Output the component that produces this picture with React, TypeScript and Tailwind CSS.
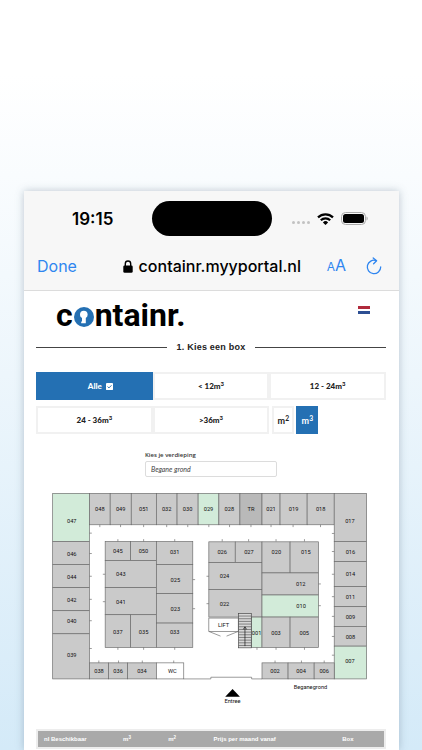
import type { ReactNode } from "react";

type Box = {
  id: string;
  x1: number;
  y1: number;
  x2: number;
  y2: number;
  label?: [number, number];
  fill?: string;
};

const GREY = "#cacaca";
const FREE = "#d2ebd9";

const boxes: Box[] = [
  { id: "047", x1: 2, y1: 1, x2: 112, y2: 145, label: [59, 84], fill: FREE },
  { id: "048", x1: 112, y1: 1, x2: 174, y2: 95 },
  { id: "049", x1: 174, y1: 1, x2: 237, y2: 95 },
  { id: "051", x1: 237, y1: 1, x2: 312, y2: 95 },
  { id: "032", x1: 312, y1: 1, x2: 374, y2: 95 },
  { id: "030", x1: 374, y1: 1, x2: 437, y2: 95 },
  { id: "029", x1: 437, y1: 1, x2: 499, y2: 95, fill: FREE },
  { id: "028", x1: 499, y1: 1, x2: 562, y2: 95 },
  { id: "TR", x1: 562, y1: 1, x2: 628, y2: 95, fill: "#b9b9b9" },
  { id: "021", x1: 628, y1: 1, x2: 682, y2: 95 },
  { id: "019", x1: 682, y1: 1, x2: 763, y2: 95 },
  { id: "018", x1: 763, y1: 1, x2: 844, y2: 95 },
  { id: "017", x1: 844, y1: 1, x2: 941, y2: 145, label: [891, 84] },
  { id: "046", x1: 2, y1: 145, x2: 112, y2: 214, label: [59, 180] },
  { id: "044", x1: 2, y1: 214, x2: 112, y2: 283, label: [59, 249] },
  { id: "042", x1: 2, y1: 283, x2: 112, y2: 352, label: [59, 318] },
  { id: "040", x1: 2, y1: 352, x2: 112, y2: 421, label: [59, 382] },
  { id: "039", x1: 2, y1: 421, x2: 112, y2: 556, label: [59, 483] },
  { id: "016", x1: 844, y1: 145, x2: 941, y2: 205 },
  { id: "014", x1: 844, y1: 205, x2: 941, y2: 280 },
  { id: "011", x1: 844, y1: 280, x2: 941, y2: 340 },
  { id: "009", x1: 844, y1: 340, x2: 941, y2: 399 },
  { id: "008", x1: 844, y1: 399, x2: 941, y2: 458 },
  { id: "007", x1: 844, y1: 458, x2: 941, y2: 556, label: [891, 501], fill: FREE },
  { id: "045", x1: 159, y1: 145, x2: 235, y2: 202 },
  { id: "050", x1: 235, y1: 145, x2: 312, y2: 202 },
  { id: "043", x1: 159, y1: 202, x2: 312, y2: 283, label: [206, 242] },
  { id: "041", x1: 159, y1: 283, x2: 312, y2: 364, label: [206, 324] },
  { id: "037", x1: 159, y1: 364, x2: 235, y2: 462, label: [197, 416] },
  { id: "035", x1: 235, y1: 364, x2: 312, y2: 462, label: [274, 416] },
  { id: "031", x1: 312, y1: 145, x2: 421, y2: 214, label: [367, 174] },
  { id: "025", x1: 312, y1: 214, x2: 421, y2: 301, label: [369, 258] },
  { id: "023", x1: 312, y1: 301, x2: 421, y2: 389, label: [369, 346] },
  { id: "033", x1: 312, y1: 389, x2: 421, y2: 462, label: [367, 416] },
  { id: "026", x1: 469, y1: 146, x2: 548, y2: 208, label: [509, 174] },
  { id: "027", x1: 548, y1: 146, x2: 628, y2: 208, label: [589, 174] },
  { id: "024", x1: 469, y1: 208, x2: 628, y2: 289, label: [516, 248] },
  { id: "022", x1: 469, y1: 289, x2: 628, y2: 371, label: [516, 330] },
  { id: "020", x1: 628, y1: 146, x2: 712, y2: 239, label: [671, 175] },
  { id: "015", x1: 712, y1: 146, x2: 797, y2: 239, label: [759, 175] },
  { id: "012", x1: 628, y1: 239, x2: 797, y2: 305, label: [744, 272] },
  { id: "010", x1: 628, y1: 305, x2: 797, y2: 371, label: [745, 337], fill: FREE },
  { id: "001", x1: 596, y1: 371, x2: 628, y2: 462, fill: FREE },
  { id: "003", x1: 628, y1: 371, x2: 712, y2: 462 },
  { id: "005", x1: 712, y1: 371, x2: 797, y2: 462 },
  { id: "038", x1: 112, y1: 508, x2: 169, y2: 556 },
  { id: "036", x1: 169, y1: 508, x2: 226, y2: 556 },
  { id: "034", x1: 226, y1: 508, x2: 312, y2: 556 },
  { id: "WC", x1: 312, y1: 508, x2: 394, y2: 556, label: [360, 532], fill: "#ffffff" },
  { id: "002", x1: 628, y1: 508, x2: 706, y2: 556 },
  { id: "004", x1: 706, y1: 508, x2: 784, y2: 556 },
  { id: "006", x1: 784, y1: 508, x2: 844, y2: 556 },
  { id: "LIFT", x1: 469, y1: 374, x2: 557, y2: 414, fill: "#ffffff" },
];

/* Door marks: vertical ones as [y, x...], horizontal ones as [x, y...] */
const verticalDoors: number[][] = [
  [95, 143, 205, 274, 343, 406, 469, 531, 595, 655, 721, 803],
  [138, 197, 274, 367, 509, 588, 670, 755],
  [462, 197, 274, 367, 613, 670, 755],
  [501, 140, 199, 270, 364, 667, 746, 814],
];
const horizontalDoors: number[][] = [
  [112, 120, 181, 249, 318, 382, 465],
  [152, 243, 325],
  [421, 259, 346],
  [462, 249, 331],
  [797, 272, 337],
  [837, 121, 175, 243, 310, 369, 429, 485],
];

const doorPath = [
  ...verticalDoors.flatMap(([y, ...xs]) => xs.map((x) => `M${x} ${y}v7`)),
  ...horizontalDoors.flatMap(([x, ...ys]) => ys.map((y) => `M${x} ${y}h7`)),
].join("");

const stairPath = Array.from({ length: 12 }, (_, i) => `M558 ${368 + i * 8}h38`).join("");

function FloorPlan() {
  return (
    <svg
      viewBox="0 0 945 640"
      className="block w-full"
      role="img"
      aria-label="Plattegrond begane grond"
      fontFamily="Roboto, sans-serif"
      fontSize="17"
      textAnchor="middle"
      fill="#111111"
    >
      {boxes.map((b) => {
        const [cx, cy] = b.label ?? [(b.x1 + b.x2) / 2, (b.y1 + b.y2) / 2];
        return (
          <g key={b.id}>
            <rect
              x={b.x1}
              y={b.y1}
              width={b.x2 - b.x1}
              height={b.y2 - b.y1}
              fill={b.fill ?? GREY}
              stroke="#6b6b6b"
              strokeWidth="2"
            />
            <text x={cx} y={cy + 7}>
              {b.id}
            </text>
          </g>
        );
      })}
      <g fill="none" stroke="#6b6b6b" strokeWidth="2">
        <path d={doorPath} />
        <path d="M469 414l35 14M557 414l-35 14" />
        <path d="M394 556h81v-5h122v5h31" />
        <rect x="558" y="360" width="38" height="103" fill="#d8d8d8" stroke="#444444" />
        <path d={stairPath} stroke="#555555" />
        <path d="M577 458v-56M572 408l5-8 5 8" stroke="#111111" />
      </g>
      <path d="M518 609l22-23 22 23z" fill="#000000" />
      <text x="540" y="628">Entree</text>
      <text x="773" y="587">Beganegrond</text>
    </svg>
  );
}

function StatusBar() {
  return (
    <div className="grid h-[55px] grid-cols-3 items-center">
      <time className="pl-12 text-[17px] font-semibold leading-5">19:15</time>
      <div className="h-[35px] w-[120px] justify-self-center rounded-full bg-black" />
      <div className="flex items-center justify-end gap-[7px] pr-[31px]">
        <span className="flex gap-[2px] pt-2">
          {[0, 1, 2, 3].map((i) => (
            <span key={i} className="size-[3px] rounded-full bg-[#c2c2c2]" />
          ))}
        </span>
        <svg viewBox="0 0 17 12" className="h-3 w-[17px]" fill="none" stroke="#000" strokeWidth="2.2">
          <path d="M1 4.4a10.7 10.7 0 0 1 15 0" />
          <path d="M3.8 7.3a6.7 6.7 0 0 1 9.4 0" />
          <path d="M8.5 12L5.9 9.4a3.7 3.7 0 0 1 5.2 0z" fill="#000" stroke="none" />
        </svg>
        <svg viewBox="0 0 27 13" className="h-[13px] w-[27px]">
          <rect x="0.5" y="0.5" width="24" height="12" rx="4" fill="none" stroke="#aaaaaa" />
          <rect x="2" y="2" width="21" height="9" rx="2.5" fill="#000" />
          <path d="M25.5 4.5c1.6.6 1.6 3.4 0 4z" fill="#aaaaaa" />
        </svg>
      </div>
    </div>
  );
}

function BrowserBar() {
  return (
    <div className="flex h-11 items-center justify-between pr-[17px] pl-[13px] pb-1">
      <button type="button" className="text-[16px] leading-5 text-[#2f86f0]">
        Done
      </button>
      <div className="ml-5 flex items-center gap-[6px]">
        <svg viewBox="0 0 10 13" className="h-[13px] w-[10px]">
          <path d="M2.3 6V3.7a2.7 2.7 0 0 1 5.4 0V6" fill="none" stroke="#000" strokeWidth="1.4" />
          <rect x="0.3" y="5.4" width="9.4" height="7.4" rx="1.4" />
        </svg>
        <span className="text-[16px] font-medium leading-5">containr.myyportal.nl</span>
      </div>
      <div className="flex items-center gap-5">
        <button type="button" aria-label="Tekstgrootte" className="flex items-baseline leading-5 text-[#2f86f0]">
          <span className="text-[12px]">A</span>
          <span className="text-[16px]">A</span>
        </button>
        <button type="button" aria-label="Vernieuwen">
          <svg viewBox="0 0 16 18" className="h-[18px] w-4" fill="none" stroke="#2f86f0" strokeWidth="1.3" strokeLinecap="round" strokeLinejoin="round">
            <path d="M10.2 3.6A6.7 6.7 0 1 0 14.7 10" />
            <path d="M7.2 1l3.4 2.8-3 3" />
          </svg>
        </button>
      </div>
    </div>
  );
}

function Logo() {
  return (
    <a
      href="#home"
      aria-label="containr."
      className="flex h-8 items-baseline gap-px font-[Roboto,sans-serif] text-[32px] font-bold leading-8 text-black"
    >
      <span>c</span>
      <svg viewBox="0 0 20 20" className="mb-1 size-5 self-end">
        <circle cx="10" cy="10" r="10" fill="#2470b3" />
        <circle cx="9.8" cy="7.6" r="3.8" fill="#fff" />
        <path d="M8 9h3.8v7.2H7.2v-1.8H8z" fill="#fff" />
      </svg>
      <span>ntainr.</span>
    </a>
  );
}

function Choice({ children, className = "" }: { children: ReactNode; className?: string }) {
  return (
    <button
      type="button"
      className={`flex h-7 items-center justify-center border-2 border-[#f1f1f1] bg-white text-[#222] ${className}`}
    >
      {children}
    </button>
  );
}

function Cubic({ text, power = "3" }: { text: string; power?: string }) {
  return (
    <span>
      {text}
      <sup>{power}</sup>
    </span>
  );
}

export default function App() {
  return (
    <main className="h-screen overflow-hidden bg-linear-to-b from-white from-10% via-[#edf6fc] via-50% to-[#d4eaf8] px-6 pt-[191px] font-[Inter,sans-serif]">
      <div className="-mr-px min-h-full bg-white shadow-[0_0_8px_rgba(80,100,120,0.35)]">
        <header className="border-b border-[#dcdcdc] bg-[#f7f7f7]">
          <StatusBar />
          <BrowserBar />
        </header>

        <div className="pr-[13px] pl-3 font-[Lato,sans-serif]">
          <div className="flex items-start justify-between pt-2 pr-4 pl-5">
            <Logo />
            <button type="button" aria-label="Nederlands" className="mt-[7px] flex h-2 w-3 flex-col justify-between">
              <span className="h-[3px] w-full bg-[#b02a3c]" />
              <span className="h-[3px] w-full bg-[#2d4f93]" />
            </button>
          </div>

          <div className="mt-[10px] flex items-center gap-[10px]">
            <span className="h-px flex-1 bg-[#444]" />
            <h1 className="font-['Liberation_Sans',sans-serif] text-[9px] font-bold leading-3 tracking-wide text-[#222]">
              1. Kies een box
            </h1>
            <span className="h-px flex-1 bg-[#444]" />
          </div>

          <div className="mt-[19px] flex flex-wrap gap-y-[6px] text-[8px] font-black leading-3">
            <button type="button" className="flex h-7 w-1/3 items-center justify-center gap-1 bg-[#2470b3] pl-3 text-white">
              Alle
              <svg viewBox="0 0 8 8" className="size-[7px]">
                <rect width="8" height="8" rx="1" fill="#fff" />
                <path d="M1.8 4.1l1.6 1.5 2.9-3" fill="none" stroke="#2470b3" strokeWidth="1.1" />
              </svg>
            </button>
            <Choice className="w-1/3">
              <Cubic text="< 12m" />
            </Choice>
            <Choice className="w-1/3">
              <Cubic text="12 - 24m" />
            </Choice>
            <Choice className="w-1/3">
              <Cubic text="24 - 36m" />
            </Choice>
            <Choice className="w-1/3">
              <Cubic text=">36m" />
            </Choice>
            <Choice className="ml-[3px] w-[22px] pt-[2px] text-[9px] font-bold">
              <Cubic text="m" power="2" />
            </Choice>
            <button type="button" className="ml-[2px] flex h-7 w-[22px] items-center justify-center bg-[#2470b3] pt-[2px] text-[9px] font-bold text-white">
              <Cubic text="m" />
            </button>
          </div>

          <div className="mx-auto mt-[15px] flex w-[132px] flex-col text-[7px] text-[#333]">
            <label htmlFor="floor" className="font-['Open_Sans',sans-serif] text-[6px] font-semibold leading-3">
              Kies je verdieping
            </label>
            <select
              id="floor"
              className="h-4 w-full appearance-none rounded-xs border border-[#dcdcdc] bg-white px-[5px] italic leading-3 text-[#444]"
            >
              <option>Begane grond</option>
            </select>
          </div>

          <div className="mt-4 pr-[18px] pl-4">
            <FloorPlan />
          </div>

          <table className="mt-[22px] w-full table-fixed border-2 border-[#ededed] text-left font-['Liberation_Sans',sans-serif] text-[6px] leading-3 text-white">
            <thead>
              <tr className="h-[18px] bg-[#a9a9a9]">
                <th className="w-[23%] pl-[6px]">nl Beschikbaar</th>
                <th className="w-[13%] pl-[6px]"><Cubic text="m" /></th>
                <th className="w-[13%] pl-[6px]"><Cubic text="m" power="2" /></th>
                <th className="w-[37%] pl-[6px]">Prijs per maand vanaf</th>
                <th className="pl-[6px]">Box</th>
              </tr>
            </thead>
          </table>
        </div>
      </div>
    </main>
  );
}
